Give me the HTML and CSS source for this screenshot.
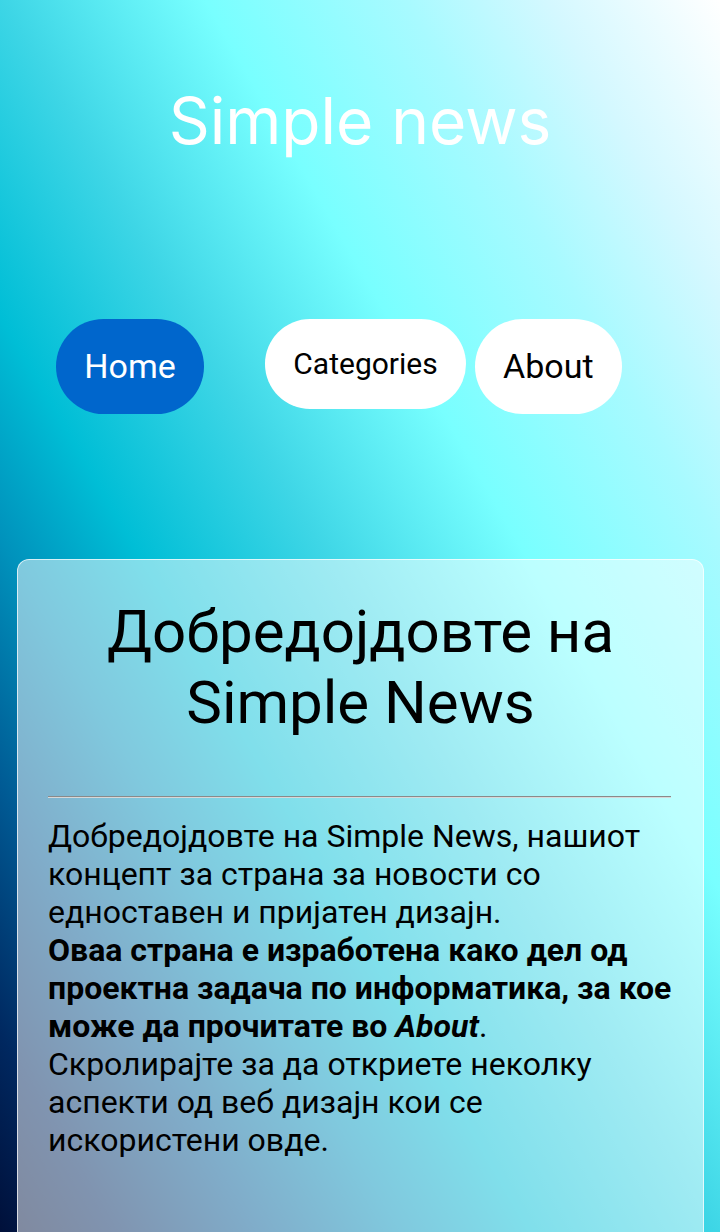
FILE: index.html
```html
<!DOCTYPE html>
<html lang="mk">
<head>
<meta charset="utf-8">
<title>Simple news</title>
<link rel="stylesheet" href="styles.css">
</head>
<body>
<header class="site-header">
  <h1 class="site-title">Simple news</h1>
</header>
<nav class="main-nav">
  <a class="nav-btn nav-home" href="#">Home</a>
  <a class="nav-btn nav-small" href="#">Categories</a>
  <a class="nav-btn" href="#">About</a>
</nav>
<main class="card">
  <h2 class="card-title">Добредојдовте на Simple News</h2>
  <hr class="card-rule">
  <p class="card-text">Добредојдовте на Simple News, нашиот концепт за страна за новости со едноставен и пријатен дизајн.<br><b>Оваа страна е изработена како дел од проектна задача по информатика, за кое може да прочитате во <i>About</i></b>.<br>Скролирајте за да откриете неколку аспекти од веб дизајн кои се искористени овде.</p>
</main>
</body>
</html>
```

FILE: styles.css
```css
html, body {
  margin: 0;
  padding: 0;
}
body {
  font-family: Roboto, "Noto Sans", sans-serif;
  color: #000;
  background: linear-gradient(60deg,
    #00103a 0%,
    #002860 8%,
    #005a94 18%,
    #0092bc 28%,
    #00bed6 37%,
    #3ed6e6 50%,
    #78ffff 64%,
    #a8faff 78%,
    #d4f8ff 88%,
    #ffffff 100%) fixed;
  min-height: 1232px;
}
.site-header {
  padding-top: 83px;
}
.site-title {
  margin: 0;
  font-family: Inter, "DejaVu Sans", sans-serif;
  font-weight: 400;
  font-size: 64px;
  line-height: 1.2;
  color: #fff;
  text-align: center;
}
.main-nav {
  display: flex;
  align-items: flex-start;
  gap: 9px;
  padding-left: 56px;
  margin-top: 159px;
}
.nav-btn {
  display: flex;
  align-items: center;
  justify-content: center;
  box-sizing: border-box;
  height: 95px;
  padding: 0 28px;
  font-size: 34px;
  line-height: 1;
  color: #000;
  background: #fff;
  text-decoration: none;
  border-radius: 50px;
}
.nav-home {
  width: 148px;
  padding: 0;
  margin-right: 52px;
  background: #0066cc;
  color: #fff;
}
.nav-small {
  width: 201px;
  height: 90px;
  padding: 0;
  font-size: 30px;
}
.card {
  display: block;
  margin: 145px 16px 0 17px;
  padding: 30px 30px 120px 30px;
  background: rgba(255, 255, 255, 0.5);
  border: 1px solid rgba(255, 255, 255, 0.7);
  border-radius: 12px;
}
.card-title {
  margin: 6px 0 0;
  font-size: 60px;
  font-weight: 400;
  line-height: normal;
  text-align: center;
}
.card-rule {
  margin: 58px 2px 0 0;
  border: 0;
  border-top: 1px solid #8a8a8a;
  border-bottom: 1px solid #d8d8d8;
}
.card-text {
  margin: 19px 0 0;
  font-size: 32px;
  line-height: normal;
}
```
